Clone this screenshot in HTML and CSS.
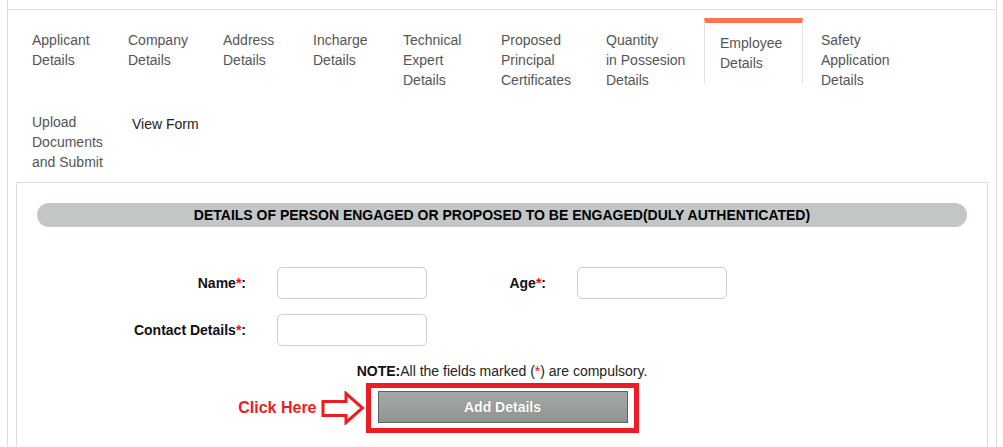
FILE: index.html
```html
<!DOCTYPE html>
<html lang="en">
<head>
<meta charset="utf-8">
<title>Employee Details</title>
<link rel="stylesheet" href="styles.css">
</head>
<body>
<div class="page">
  <div class="top-strip"></div>
  <nav class="tabs">
    <a class="tab w-applicant">Applicant<br>Details</a>
    <a class="tab w-company">Company<br>Details</a>
    <a class="tab w-address">Address<br>Details</a>
    <a class="tab w-incharge">Incharge<br>Details</a>
    <a class="tab w-technical">Technical<br>Expert<br>Details</a>
    <a class="tab w-proposed">Proposed<br>Principal<br>Certificates</a>
    <a class="tab w-quantity">Quantity<br>in Possesion<br>Details</a>
    <a class="tab tab-active">Employee<br>Details</a>
    <a class="tab w-safety">Safety<br>Application<br>Details</a>
    <a class="tab w-upload">Upload<br>Documents<br>and Submit</a>
    <a class="tab tab-view">View Form</a>
  </nav>

  <section class="panel">
    <h2 class="section-head">DETAILS OF PERSON ENGAGED OR PROPOSED TO BE ENGAGED(DULY AUTHENTICATED)</h2>

    <form class="form-grid">
      <label class="lbl">Name<span class="req">*</span>:</label>
      <input class="field" type="text">
      <label class="lbl">Age<span class="req">*</span>:</label>
      <input class="field" type="text">
      <label class="lbl">Contact Details<span class="req">*</span>:</label>
      <input class="field" type="text">
    </form>

    <p class="note"><b>NOTE:</b>All the fields marked (<span class="req">*</span>) are compulsory.</p>

    <div class="action-row">
      <div class="hint">
        <span class="click-here">Click Here</span>
        <svg class="arrow" width="44" height="34" viewBox="0 0 44 34" aria-hidden="true">
          <path d="M2 10.5 H25 V2.5 L41.5 17 L25 31.5 V24.5 H2 Z" fill="#fff" stroke="#ed1c24" stroke-width="3" stroke-linejoin="miter"/>
        </svg>
      </div>
      <div class="red-box">
        <button class="btn" type="button">Add Details</button>
      </div>
      <div></div>
    </div>
  </section>
</div>
</body>
</html>
```

FILE: styles.css
```css
* { box-sizing: border-box; }

body {
  margin: 0;
  background: #fff;
  font-family: "Liberation Sans", Arial, sans-serif;
  font-size: 14px;
  color: #222;
}

.page {
  margin-left: 7px;
  width: 990px;
  min-height: 447px;
  border-left: 1px solid #dedede;
  border-right: 1px solid #dedede;
}

.top-strip {
  height: 10px;
  border-bottom: 1px solid #dedede;
}

.tabs {
  display: flex;
  flex-wrap: wrap;
  align-items: flex-start;
  padding: 8px 0 0 9px;
}

.tab {
  display: block;
  padding: 12px 15px 10px;
  line-height: 20px;
  color: #555;
  text-decoration: none;
  white-space: nowrap;
}

.w-applicant { width: 96px; }
.w-company { width: 95px; }
.w-address { width: 90px; }
.w-incharge { width: 90px; }
.w-technical { width: 98px; }
.w-proposed { width: 105px; }
.w-quantity { width: 113px; }
.w-safety { width: 150px; }
.w-upload { width: 100px; }

.tab-active {
  width: 99px;
  margin-right: 3px;
  padding-top: 10px;
  border-top: 5px solid #ff7551;
  border-left: 1px solid #e2e2e2;
  border-right: 1px solid #e2e2e2;
}

.tab-view {
  padding-top: 14px;
  color: #222;
}

.panel {
  margin: 0 8px;
  border: 1px solid #dedede;
  border-bottom: none;
  padding: 20px 20px 30px;
}

.section-head {
  margin: 0;
  height: 24px;
  line-height: 24px;
  border-radius: 12px;
  background: #c3c6c6;
  text-align: center;
  font-size: 14px;
  font-weight: bold;
  color: #000;
}

.form-grid {
  display: grid;
  grid-template-columns: 240px 150px 150px 150px;
  row-gap: 15px;
  align-items: center;
  margin-top: 40px;
}

.lbl {
  text-align: right;
  padding-right: 31px;
  font-weight: bold;
  font-size: 14px;
  color: #111;
}

.req { color: #f01010; font-weight: normal; }
.lbl .req { font-weight: bold; }

.field {
  width: 150px;
  height: 32px;
  border: 1px solid #cfcfcf;
  border-radius: 5px;
  background: #fff;
}

.note {
  margin: 15px 0 0;
  line-height: 20px;
  text-align: center;
  font-size: 14px;
  color: #222;
}
.note b { color: #111; }

.action-row {
  display: grid;
  grid-template-columns: 1fr auto 1fr;
  align-items: center;
  margin-top: 2px;
}

.hint {
  display: flex;
  justify-content: flex-end;
  align-items: center;
  gap: 4px;
  padding-right: 1px;
}

.click-here {
  color: #ed1c24;
  font-weight: bold;
  font-size: 16px;
  line-height: 20px;
}

.arrow { display: block; }

.red-box {
  border: 5px solid #ed1c24;
  padding: 3px 6px 5px 7px;
}

.btn {
  display: block;
  width: 250px;
  height: 32px;
  border: 1px solid #5a6561;
  background: linear-gradient(#a5a9a7, #8f9391);
  color: #fff;
  font-family: "Liberation Sans", Arial, sans-serif;
  font-weight: bold;
  font-size: 14px;
  text-shadow: 0 0 1px rgba(0,0,0,0.25);
  padding: 0;
}
```
